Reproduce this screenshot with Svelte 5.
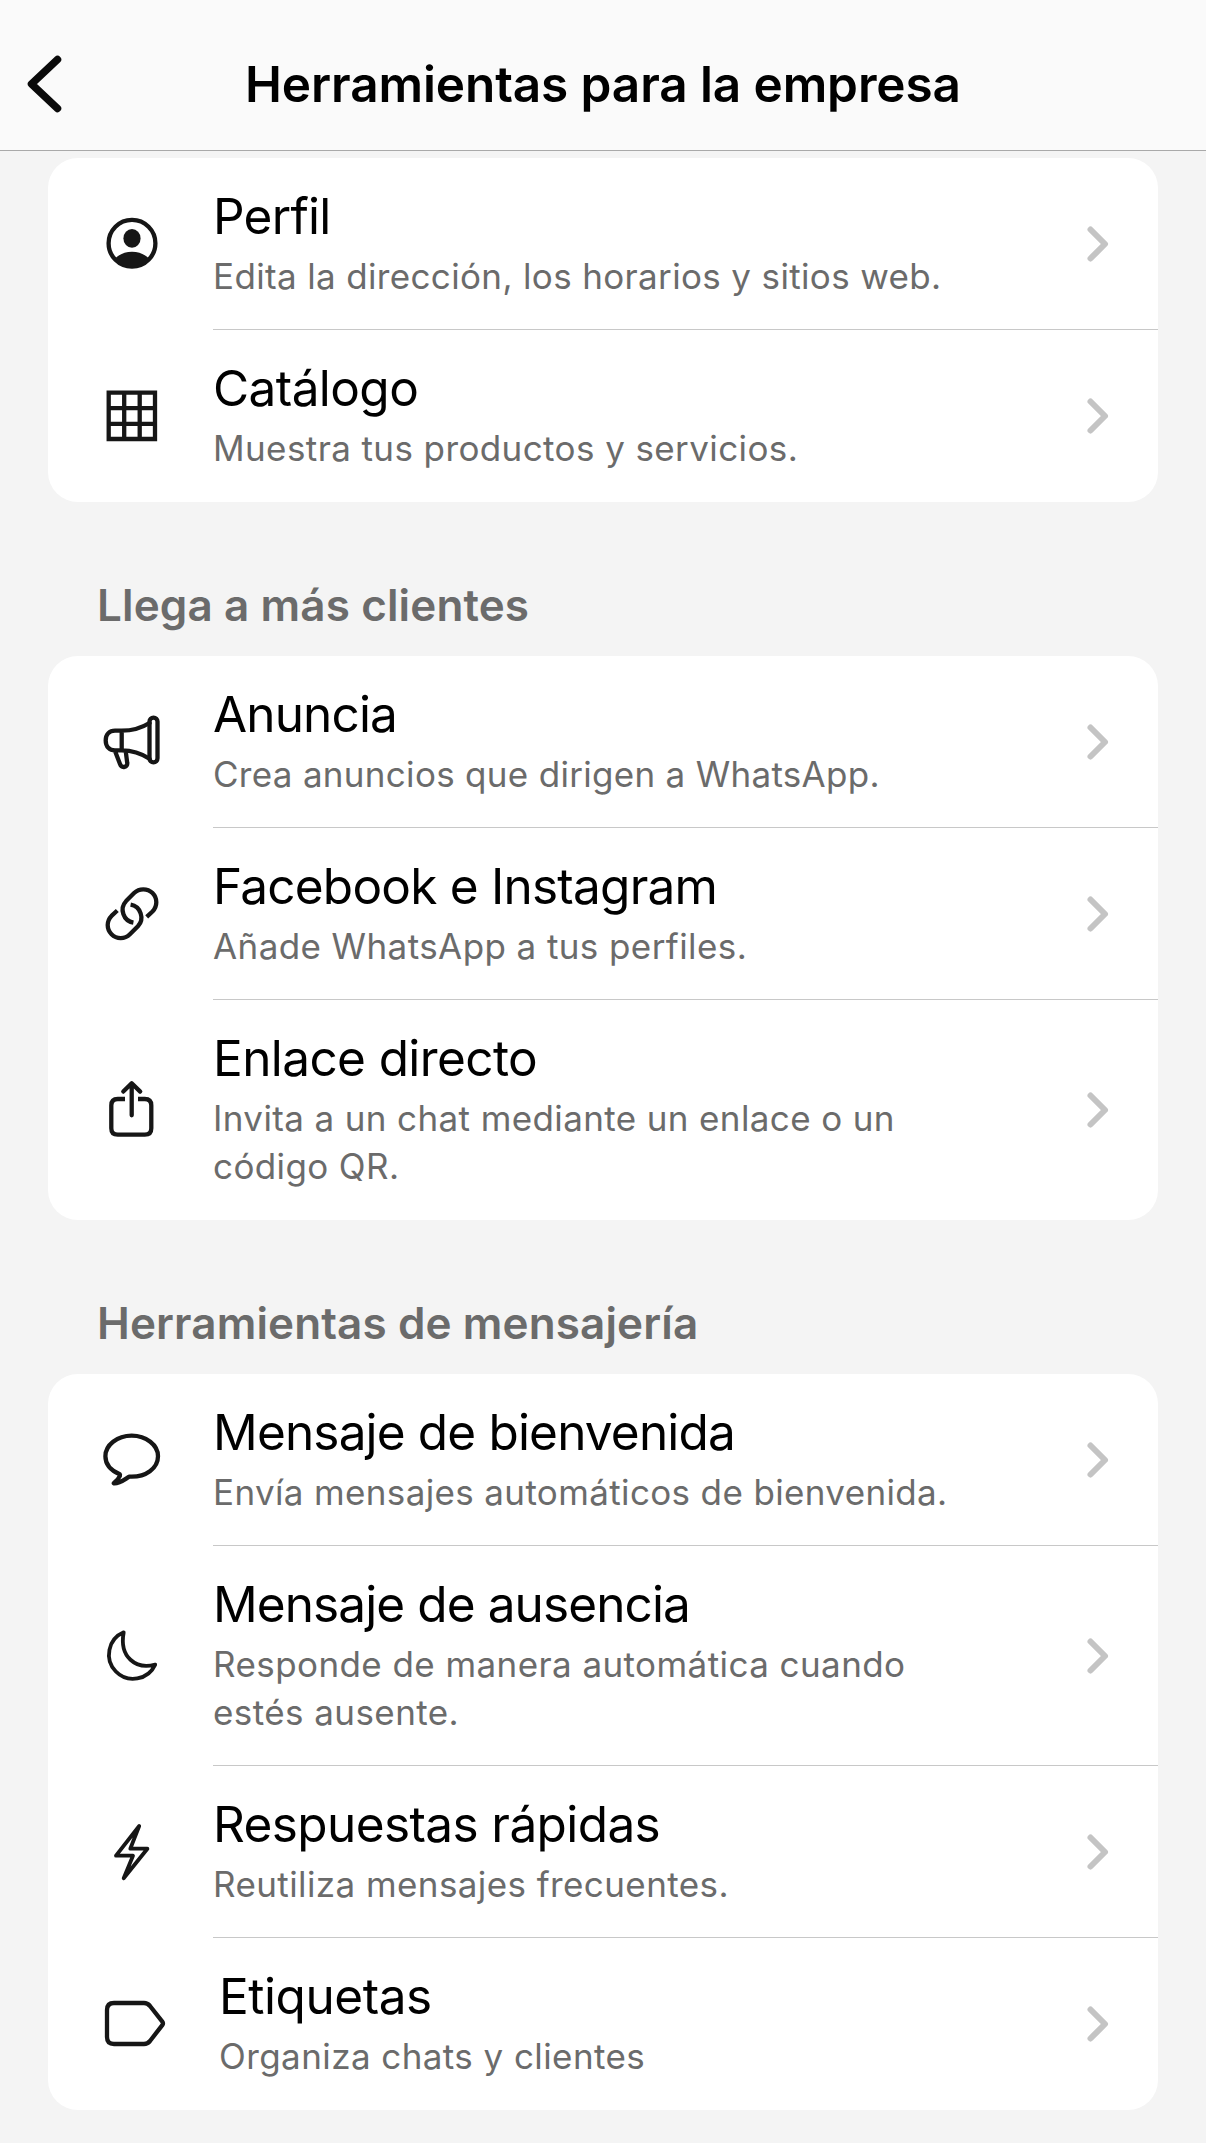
<script>
  // `tt` and `lt` are the letter-spacing values (px) of the title and of its description lines.
  const sections = [
    {
      heading: null,
      items: [
        { icon: 'profile', title: 'Perfil', tt: -0.73, lines: ['Edita la dirección, los horarios y sitios web.'], lt: 0.35 },
        { icon: 'grid', title: 'Catálogo', tt: -0.58, lines: ['Muestra tus productos y servicios.'], lt: 0.4 },
      ],
    },
    {
      heading: 'Llega a más clientes',
      items: [
        { icon: 'megaphone', title: 'Anuncia', tt: -0.85, lines: ['Crea anuncios que dirigen a WhatsApp.'], lt: 0.3 },
        { icon: 'link', title: 'Facebook e Instagram', tt: -0.77, lines: ['Añade WhatsApp a tus perfiles.'], lt: 0.41 },
        { icon: 'share', title: 'Enlace directo', tt: -0.6, lines: ['Invita a un chat mediante un enlace o un', 'código QR.'], lt: 0.38 },
      ],
    },
    {
      heading: 'Herramientas de mensajería',
      items: [
        { icon: 'bubble', title: 'Mensaje de bienvenida', tt: -0.83, lines: ['Envía mensajes automáticos de bienvenida.'], lt: 0.36 },
        { icon: 'moon', title: 'Mensaje de ausencia', tt: -0.9, lines: ['Responde de manera automática cuando', 'estés ausente.'], lt: 0.42 },
        { icon: 'bolt', title: 'Respuestas rápidas', tt: -0.6, lines: ['Reutiliza mensajes frecuentes.'], lt: 0.41 },
        { icon: 'label', title: 'Etiquetas', tt: -0.45, lines: ['Organiza chats y clientes'], lt: 0.42 },
      ],
    },
  ];
</script>

<div class="screen">
  <header>
    <svg class="back" viewBox="0 0 40 60" aria-hidden="true"><path d="M33.5 5.5 7.5 30l26 24.5" /></svg>
    <h1>Herramientas para la empresa</h1>
  </header>

  <main>
    {#each sections as section}
      {#if section.heading}<h2>{section.heading}</h2>{/if}
      <ul>
        {#each section.items as item}
          <li class:indented={item.icon === 'label'}>
            <svg class="icon" viewBox="0 0 60 60" aria-hidden="true">
              {#if item.icon === 'profile'}
                <circle cx="30" cy="29.3" r="23.4" />
                <ellipse class="solid" cx="30" cy="24.4" rx="8.6" ry="9.4" />
                <path class="solid" d="M13 44.5c4.5-4.5 10.5-6.8 17-6.8s12.5 2.300 17 6.800C43 50.500 37 54 30 54s-13-3.500-17-9.500z" />
              {:else if item.icon === 'grid'}
                <path class="square" d="M6.700 6.700H53V53H6.700zM22.200 6.700V53M37.700 6.700V53M6.700 22.200H53M6.700 37.800H53" />
              {:else if item.icon === 'megaphone'}
                <rect x="47.500" y="5.600" width="8" height="44.700" rx="4" />
                <path d="M47.500 11C39.500 16 29 18.700 19.700 18.700H13c-5.500 0-9.300 3.500-9.300 9.800s3.800 9.800 9.300 9.800h6.700c9.300 0 19.800 3.200 27.800 8.400M19.700 18.700v19.600M13 39l5 13c1.800 4.800 8 3.300 7.200-1.300l-1.400-11" />
              {:else if item.icon === 'link'}
                <path class="cut" d="M44.700 32.900l5.800-5.400A13 13 0 0 0 32.100 9.100l-8 8A13 13 0 0 0 31.400 38.700" />
                <path class="cut" d="M15.300 26.500l-5.800 5.400A13 13 0 0 0 27.900 50.300l8-8A13 13 0 0 0 28.600 20.700" />
              {:else if item.icon === 'share'}
                <path class="cut" d="M23 19h-7.200q-6.500 0-6.500 6.500v22.700q0 6.500 6.500 6.500h27q6.500 0 6.500-6.500V25.500q0-6.500-6.500-6.500H36" />
                <path d="M29.700 35.300V3.300M21.300 11.600 29.700 3.200l8.500 8.400" />
              {:else if item.icon === 'bubble'}
                <path d="M27.300 46.600C44 47.500 56 38 56 26.200 56 15 44.200 5.700 29.700 5.700S3.400 15 3.400 26.200C3.400 34 9 40.500 17.800 44.200c.3.300.3.800.1 1.600-1.200 2.800-3.300 5.300-6.200 7.500 5.200.8 10-3.300 15.600-6.700z" />
              {:else if item.icon === 'moon'}
                <path class="thin" d="M21.700 6.300A24.200 24.200 0 1 0 53.200 38.600C34 44 17 31 21.700 6.300z" />
              {:else if item.icon === 'bolt'}
                <path class="thin" d="M37.200 4 28.300 26.700H45.400L21.700 56.200 31 33.700H14z" />
              {:else}
                <path d="M12 9h30q3.500 0 6 3L60.300 27.700q1.300 1.700 0 3.400L48 47q-2.500 3-6 3H12q-7 0-7-7V16q0-7 7-7z" />
              {/if}
            </svg>
            <div class="text">
              <h3 style:letter-spacing="{item.tt}px">{item.title}</h3>
              <p style:letter-spacing="{item.lt}px">{#each item.lines as line}<span>{line}</span>{/each}</p>
            </div>
            <svg class="chevron" viewBox="0 0 30 40" aria-hidden="true"><path d="M8.500 5.500 23 20 8.500 34.500" /></svg>
          </li>
        {/each}
      </ul>
    {/each}
  </main>
</div>

<style>
  :global(body) { margin: 0; background: #f4f4f4; }
  .screen {
    width: 1206px;
    height: 2143px;
    overflow: hidden;
    background: #f4f4f4;
    font-family: Inter, 'Liberation Sans', sans-serif;
    color: #000;
  }
  h1, h2, h3, p, ul { margin: 0; padding: 0; font-weight: 400; }
  header {
    box-sizing: border-box;
    height: 151px;
    padding: 54px 24px 0;
    display: grid;
    grid-template-columns: 40px 1fr 40px;
    background: #fafafa;
    border-bottom: 1px solid #a9a9a9;
  }
  .back { width: 40px; height: 60px; stroke: #0a0a0a; stroke-width: 7.5; }
  h1 { font-size: 49.5px; line-height: 60px; font-weight: 600; letter-spacing: -0.1px; text-align: center; white-space: nowrap; }
  main { padding: 7px 48px 0; }
  h2 {
    box-sizing: border-box;
    height: 154px;
    padding: 73px 49px 0;
    font-size: 44px;
    line-height: 60px;
    font-weight: 600;
    letter-spacing: 0.12px;
    color: #6b6b6b;
    white-space: nowrap;
  }
  ul { list-style: none; background: #fff; border-radius: 30px; }
  li { display: flex; align-items: center; padding-left: 54px; }
  svg { flex: none; fill: none; stroke-linecap: round; stroke-linejoin: round; overflow: visible; }
  .icon { width: 60px; height: 60px; stroke: #161616; stroke-width: 4.3; }
  .solid { fill: #161616; stroke: none; }
  .square { stroke-linejoin: miter; }
  .cut { stroke-linecap: butt; }
  .thin { stroke-width: 3.8; }
  .text {
    flex: 1;
    box-sizing: border-box;
    margin-left: 51px;
    padding: 28px 0 29px;
    border-bottom: 1px solid #c8c8c8;
  }
  li:last-child .text { border-color: transparent; }
  .indented .text { padding-left: 6px; }
  h3 { font-size: 49.5px; line-height: 60px; white-space: nowrap; }
  p { margin-top: 6px; font-size: 35px; line-height: 48px; color: #6b6b6b; }
  span { display: block; white-space: nowrap; }
  .chevron { width: 30px; height: 40px; margin-left: -76px; margin-right: 46px; stroke: #c4c4c4; stroke-width: 6; }
</style>
